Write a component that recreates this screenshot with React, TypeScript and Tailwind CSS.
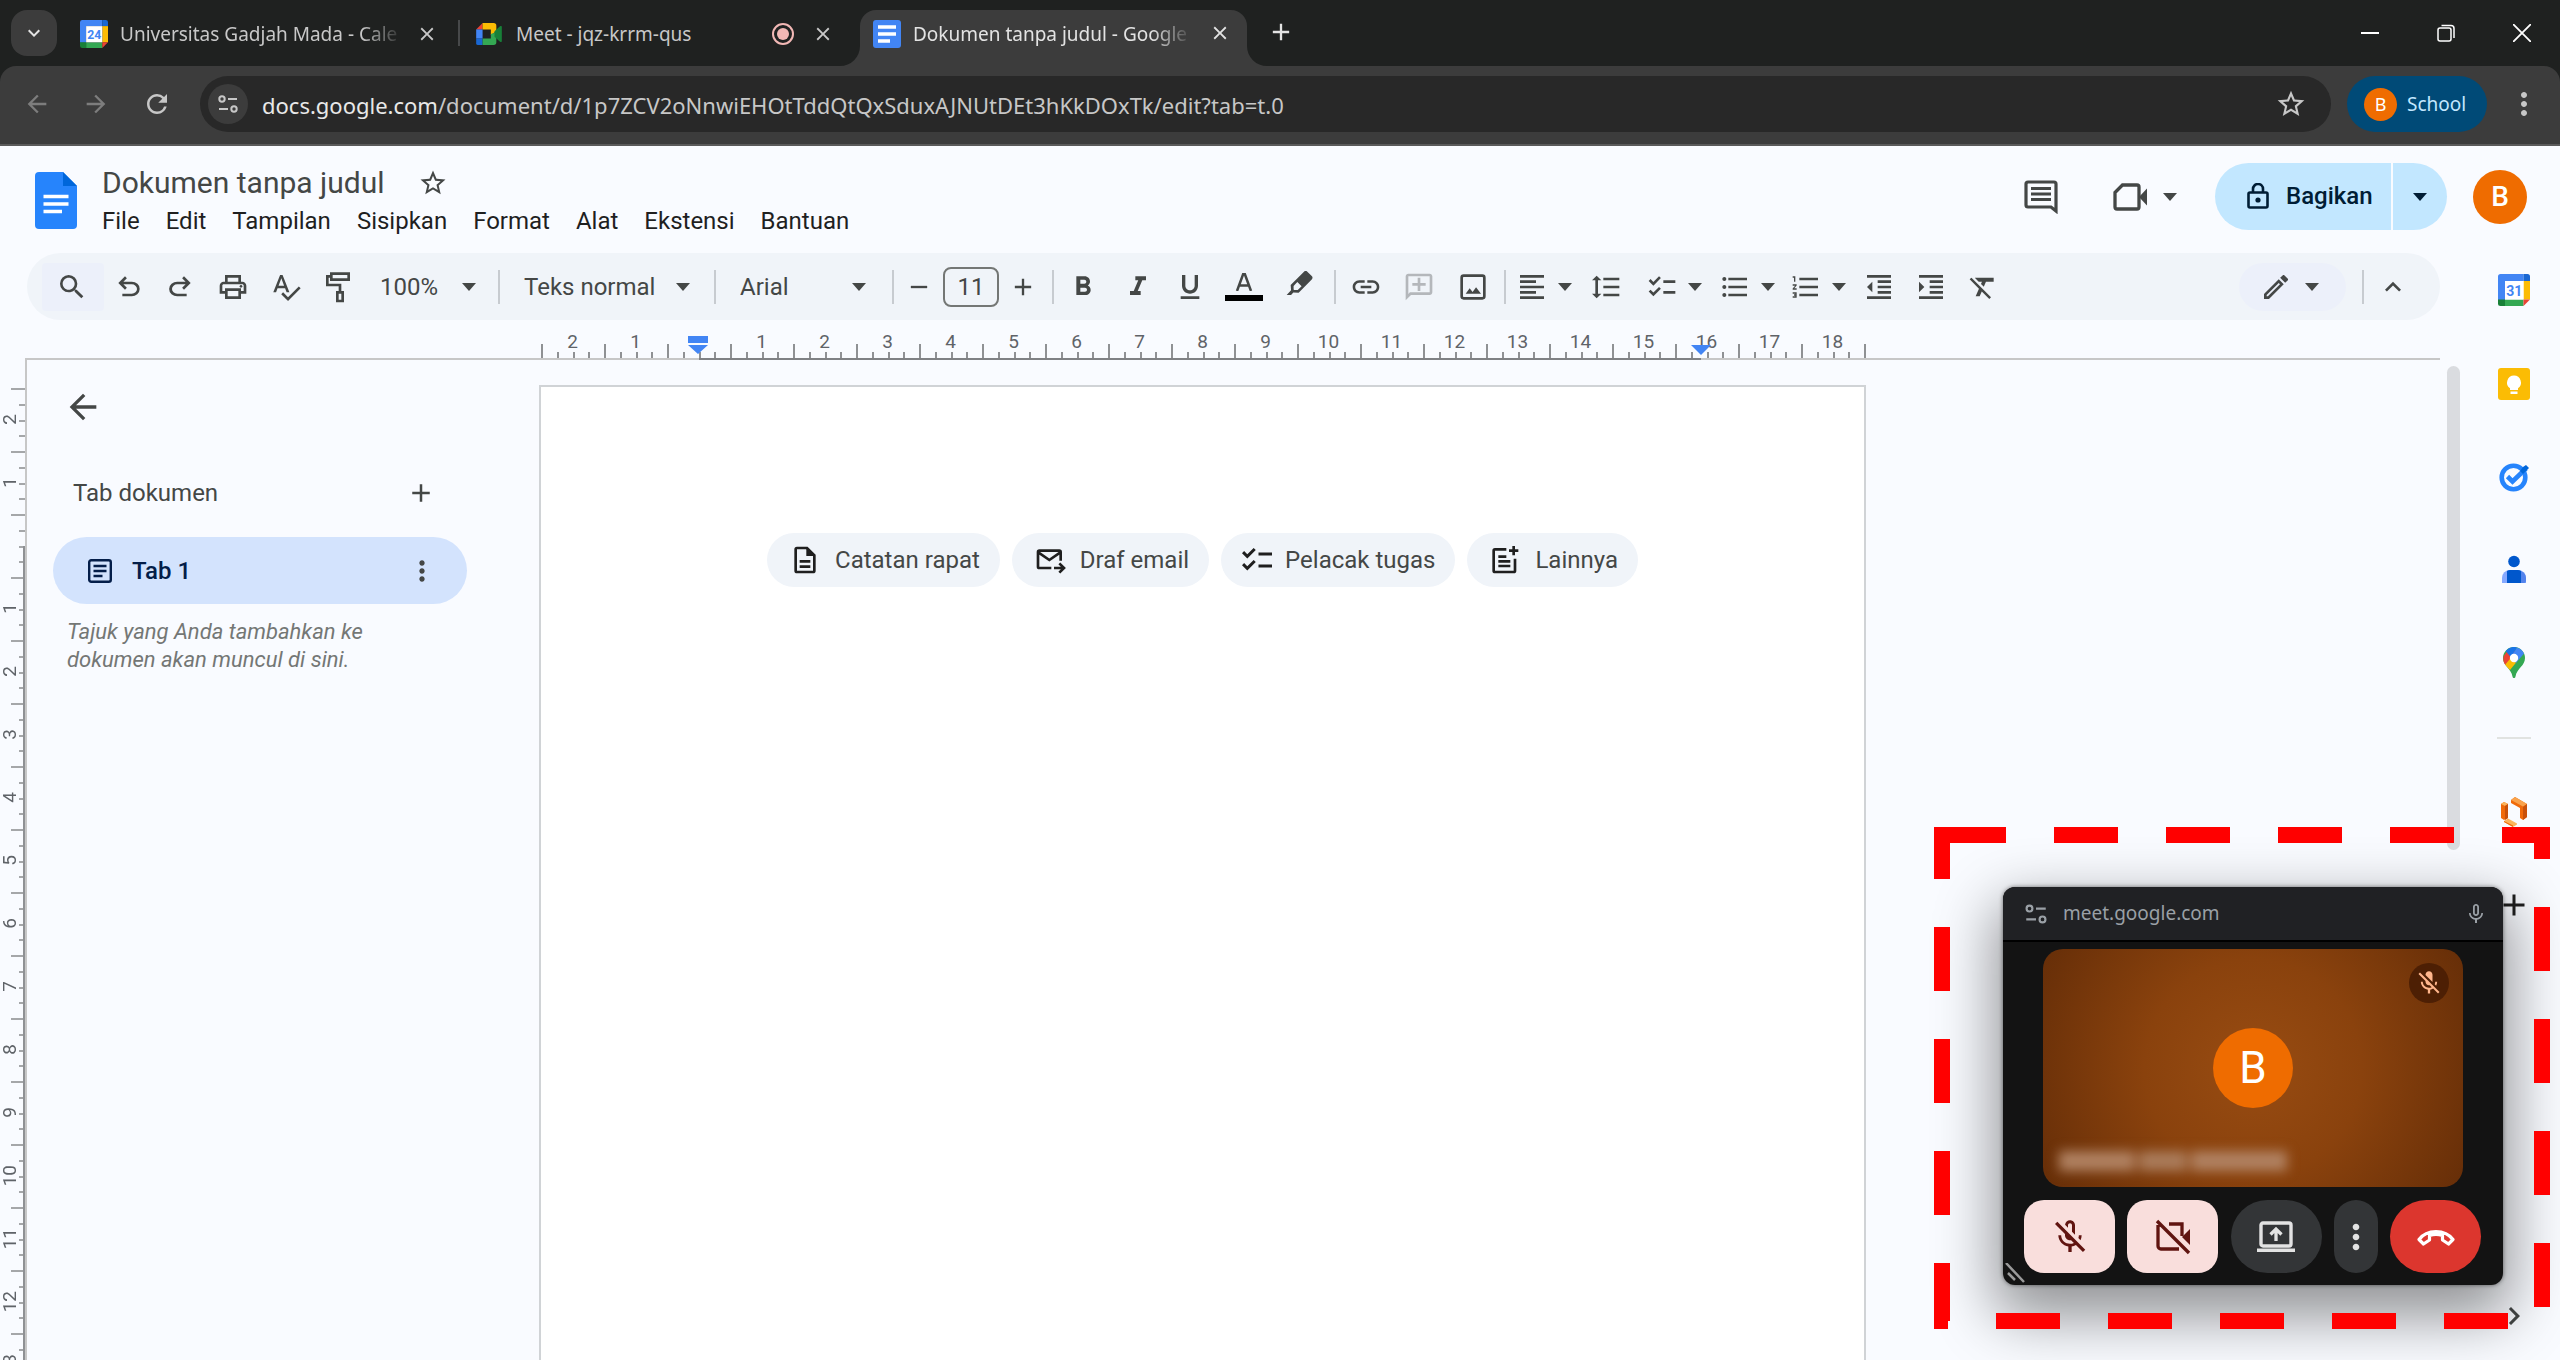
import React from "react";
import {
  MdSearch, MdOutlinePrint, MdSpellcheck, MdFormatBold, MdFormatItalic, MdFormatUnderlined, MdFormatAlignLeft,
  MdFormatLineSpacing, MdChecklist, MdFormatListBulleted, MdFormatListNumbered, MdFormatIndentDecrease,
  MdFormatIndentIncrease, MdFormatClear, MdInsertLink, MdOutlineAddComment, MdOutlineEdit, MdKeyboardArrowUp,
  MdMoreVert, MdStarBorder, MdAdd, MdRemove, MdArrowBack, MdArrowForward, MdRefresh, MdClose, MdKeyboardArrowDown,
  MdMicOff, MdOutlineMicOff, MdMicNone, MdChevronRight,
} from "react-icons/md";

type IconProps = { className?: string };

const Caret = ({ className = "" }: IconProps) => (
  <svg viewBox="0 0 14 8" className={"h-2 w-3.5 shrink-0 fill-current " + className} aria-hidden="true">
    <path d="M0 0h14L7 8z" />
  </svg>
);

const Symbol = ({ d, className = "size-8" }: { d: string; className?: string }) => (
  <svg viewBox="0 -960 960 960" className={"shrink-0 fill-current " + className} aria-hidden="true">
    <path d={d} />
  </svg>
);

const UNDO = "M280-200v-80h284q63 0 109.500-40T720-420q0-60-46.500-100T564-560H312l104 104-56 56-200-200 200-200 56 56-104 104h252q97 0 169.500 63T800-420q0 94-72.500 157T564-200H280Z";
const REDO = "M396-200q-97 0-169.500-63T154-420q0-94 72.500-157T396-640h252L544-744l56-56 200 200-200 200-56-56 104-104H396q-63 0-109.500 40T240-420q0 60 46.500 100T396-280h284v80H396Z";

const PaintRoller = () => (
  <svg viewBox="0 0 24 24" className="size-8 fill-none stroke-current stroke-2" aria-hidden="true">
    <path d="M7 2h13v4.500H7zM7 4H4v6.500h9.500V16M11.500 16h4v6.500h-4z" />
  </svg>
);

const Highlighter = () => (
  <svg viewBox="0 0 24 24" className="size-8 fill-current" aria-hidden="true">
    <path fillRule="evenodd" d="M2 18l3.300-3.500-.3-4L15 .5a1.800 1.800 0 0 1 2.500 0l3.300 3.300a1.800 1.800 0 0 1 0 2.500L11 16.300l-4-.2L5.300 18zM10 8.300L7.200 11.200v2.600l.4.400h2.700l2.900-2.800z" />
  </svg>
);

const ImageIcon = () => (
  <svg viewBox="0 0 24 24" className="size-8" aria-hidden="true">
    <rect x="3.500" y="3.500" width="17" height="17" rx="1.500" fill="none" stroke="currentColor" strokeWidth="2" />
    <path d="M6.500 17l3-4 2.200 2.700 2.600-3.600 3.700 4.900z" fill="currentColor" />
  </svg>
);

const TuneIcon = ({ className = "size-6" }: IconProps) => (
  <svg viewBox="0 0 24 24" className={"shrink-0 fill-none stroke-current stroke-2 " + className} aria-hidden="true">
    <circle cx="6" cy="7" r="2.700" />
    <path d="M12 7h9M3 17h9" />
    <circle cx="18" cy="17" r="2.700" />
  </svg>
);

const CalendarIcon = ({ day, className }: { day: string; className: string }) => (
  <svg viewBox="0 0 32 32" className={className} aria-hidden="true">
    <path d="M2.500 0H25.500V7H7v19H0V2.500A2.500 2.500 0 0 1 2.500 0z" fill="#4285f4" />
    <path d="M25.500 0h4A2.500 2.500 0 0 1 32 2.500V7h-6.500z" fill="#1967d2" />
    <path d="M25.500 7H32v18.500h-6.500z" fill="#fbbc04" />
    <path d="M7 25.500h18.500V32H7z" fill="#34a853" />
    <path d="M0 25.500h7V32H2.500A2.500 2.500 0 0 1 0 29.500z" fill="#188038" />
    <path d="M25.500 25.500H32L25.500 32z" fill="#ea4335" />
    <path d="M7 7h18.500v18.500H7z" fill="#fff" />
    <text x="16.200" y="21.500" textAnchor="middle" fontSize="14" fontWeight="700" fontFamily="Roboto, sans-serif" fill="#4285f4">{day}</text>
  </svg>
);

const MeetIcon = () => (
  <svg viewBox="0 0 28 24" className="h-5.5 w-6.5 shrink-0" aria-hidden="true">
    <path d="M0 7l7-7v7z" fill="#ea4335" />
    <path d="M7 0h12a3 3 0 0 1 3 3v6l-6 4V7H7z" fill="#fbbc04" />
    <path d="M0 7h7v10H0z" fill="#4285f4" />
    <path d="M0 17h7v7H2a2 2 0 0 1-2-2z" fill="#1967d2" />
    <path d="M7 17h9v-5l6-2v11a3 3 0 0 1-3 3H7z" fill="#34a853" />
    <path d="M20 9l6-5.500c1-.7 2-.3 2 .8v15.400c0 1.100-1 1.500-2 .8L20 15z" fill="#188038" />
  </svg>
);

const IconButton = ({ label, className = "w-13", children }: { label: string; className?: string; children: React.ReactNode }) => (
  <button aria-label={label} className={"flex h-12 shrink-0 items-center justify-center " + className}>
    {children}
  </button>
);

const Divider = () => <div className="h-8.5 w-0.5 shrink-0 bg-[#c7cbd0]" />;

const Select = ({ label, value, className }: { label: string; value: string; className: string }) => (
  <label className={"flex h-12 shrink-0 items-center " + className}>
    <select aria-label={label} defaultValue={value} className="min-w-0 flex-1 appearance-none bg-transparent outline-none">
      <option>{value}</option>
    </select>
    <Caret />
  </label>
);

/* ---------- Browser chrome ---------- */

const TabTitle = ({ children, className = "" }: { children: string; className?: string }) => (
  <span className={"min-w-0 flex-1 whitespace-nowrap " + className}>{children}</span>
);

const Flare = ({ className }: IconProps) => (
  <svg viewBox="0 0 20 20" className={"absolute bottom-0 size-5 fill-[#3c3c3c] " + className} aria-hidden="true">
    <path d="M20 0v20H0A20 20 0 0 0 20 0z" />
  </svg>
);

function TabStrip() {
  return (
    <div className="flex h-16.5 items-start pl-[11px] text-[19px] leading-7 text-[#c8c8c8]">
      <button aria-label="Telusuri tab" className="mt-2.5 flex h-11.5 w-11.5 shrink-0 items-center justify-center rounded-2xl bg-[#3c3c3c] text-[#e3e3e3]">
        <MdKeyboardArrowDown className="size-6" />
      </button>
      <div className="mt-2.5 flex h-12 w-[401px] items-center pr-5 pl-[23px]">
        <CalendarIcon day="24" className="mr-3 size-7 shrink-0" />
        <TabTitle className="mr-3 mask-r-from-85%">Universitas Gadjah Mada - Cale</TabTitle>
        <button aria-label="Tutup tab"><MdClose className="size-5.5" /></button>
      </div>
      <div className="mt-5 h-6.5 w-0.5 bg-[#47494a]" />
      <div className="mt-2.5 flex h-12 w-[400px] items-center pr-[26px] pl-4">
        <MeetIcon />
        <TabTitle className="mx-3.5">Meet - jqz-krrm-qus</TabTitle>
        <span className="mr-[18px] flex size-[22px] items-center justify-center rounded-full border-2 border-[#f2b8b5]">
          <span className="size-3 rounded-full bg-[#f2b8b5]" />
        </span>
        <button aria-label="Tutup tab"><MdClose className="size-5.5" /></button>
      </div>
      <div className="relative mt-2.5 flex h-14 w-[387px] items-start rounded-t-2xl bg-[#3c3c3c] pt-2.5 pr-4 pl-[13px] text-[#e3e3e3]">
        <Flare className="right-full" />
        <Flare className="left-full -scale-x-100" />
        <svg viewBox="0 0 28 28" className="mr-3 size-7 shrink-0" aria-hidden="true">
          <rect width="28" height="28" rx="3" fill="#4285f4" />
          <path d="M5 7h18M5 14h18M5 21h12" stroke="#fff" strokeWidth="3.500" />
        </svg>
        <TabTitle className="mr-4 mask-r-from-85%">Dokumen tanpa judul - Google</TabTitle>
        <button aria-label="Tutup tab" className="mt-0.5"><MdClose className="size-5.5" /></button>
      </div>
      <button aria-label="Tab baru" className="mt-4.5 ml-5 text-[#e3e3e3]"><MdAdd className="size-7" /></button>
      <div className="ml-auto flex h-16.5 items-center text-white">
        <button aria-label="Minimalkan" className="flex w-[76px] justify-center"><span className="h-0.5 w-4.5 bg-white" /></button>
        <button aria-label="Pulihkan" className="flex w-[76px] justify-center">
          <svg viewBox="0 0 18 18" className="size-4.5 fill-none stroke-white stroke-[1.500]" aria-hidden="true">
            <rect x="1" y="4" width="13" height="13" rx="2" />
            <path d="M4.500 1.500H14A3 3 0 0 1 17 4.500V14" />
          </svg>
        </button>
        <button aria-label="Tutup" className="flex w-[76px] justify-center">
          <svg viewBox="0 0 18 18" className="size-4.5 stroke-white stroke-[1.800]" aria-hidden="true"><path d="M0 0l18 18M18 0L0 18" /></svg>
        </button>
      </div>
    </div>
  );
}

function AddressBar() {
  return (
    <div className="flex h-20 items-center rounded-t-2xl border-b-2 border-[#5a5a5a] bg-[#3c3c3c] pb-0.5 pl-2.5 text-[#c7c7c7]">
      <IconButton label="Kembali" className="w-[53px] text-[#7d7d7d]"><MdArrowBack className="size-7" /></IconButton>
      <IconButton label="Maju" className="w-[66px] text-[#7d7d7d]"><MdArrowForward className="size-7" /></IconButton>
      <IconButton label="Muat ulang" className="w-14"><MdRefresh className="size-7.5" /></IconButton>
      <div className="ml-[15px] flex h-14 min-w-0 flex-1 items-center rounded-full bg-[#282828] pr-6 pl-2">
        <button aria-label="Informasi situs" className="flex size-10 shrink-0 items-center justify-center rounded-full bg-[#3c3c3c]"><TuneIcon /></button>
        <div className="ml-3.5 min-w-0 flex-1 truncate pt-0.5 text-[22px]">
          <span className="text-[#e8e8e8]">docs.google.com</span>/document/d/1p7ZCV2oNnwiEHOtTddQtQxSduxAJNUtDEt3hKkDOxTk/edit?tab=t.0
        </div>
        <button aria-label="Tandai"><MdStarBorder className="size-8" /></button>
      </div>
      <button className="ml-4 flex h-14 w-35 items-center rounded-full bg-[#004a77] pl-[17px] text-[19px] text-[#c2e7ff]">
        <span className="mr-2.5 flex size-[33px] items-center justify-center rounded-full bg-[#ef6c00] text-lg text-white">B</span>
        School
      </button>
      <IconButton label="Menu" className="w-[73px]"><MdMoreVert className="size-9" /></IconButton>
    </div>
  );
}

/* ---------- Document header ---------- */

const MENUS = ["File", "Edit", "Tampilan", "Sisipkan", "Format", "Alat", "Ekstensi", "Bantuan"];

function DocHeader() {
  return (
    <header className="flex h-[107px] items-start pr-[33px] pl-[35px]">
      <svg viewBox="0 0 42 57" className="mt-6.5 h-[57px] w-[42px] shrink-0" aria-hidden="true">
        <path d="M4 0h24l14 14v39a4 4 0 0 1-4 4H4a4 4 0 0 1-4-4V4a4 4 0 0 1 4-4z" fill="#2684fc" />
        <path d="M28 0l14 14H28z" fill="#0066da" />
        <path d="M8.500 24.500h25M8.500 32h25M8.500 39.500h18.500" stroke="#fff" strokeWidth="3.500" />
      </svg>
      <div className="mt-[19px] ml-[25px] flex-1">
        <div className="flex items-center text-[#444746]">
          <h1 className="text-[30px] leading-9">Dokumen tanpa judul</h1>
          <button aria-label="Beri bintang" className="ml-[33px]"><MdStarBorder className="size-[30px]" /></button>
        </div>
        <nav className="mt-0.5 flex gap-[26px] text-[24px] leading-9 text-[#1f1f1f]">
          {MENUS.map((m) => <button key={m}>{m}</button>)}
        </nav>
      </div>
      <div className="mt-[17px] flex items-center text-[#444746]">
        <button aria-label="Komentar" className="mr-[55px]">
          <svg viewBox="0 0 34 34" className="size-[34px]" aria-hidden="true">
            <path d="M4 2h26a2 2 0 0 1 2 2v27l-5-4H4a2 2 0 0 1-2-2V4a2 2 0 0 1 2-2z" fill="none" stroke="currentColor" strokeWidth="3.200" />
            <path d="M7 8.500h20M7 14h20M7 19.500h20" stroke="currentColor" strokeWidth="3" />
          </svg>
        </button>
        <button aria-label="Mulai panggilan video" className="mr-[38px] flex items-center gap-4">
          <svg viewBox="0 0 34 28" className="h-7 w-[34px]" aria-hidden="true">
            <path d="M9.500 2H24a2 2 0 0 1 2 2v20a2 2 0 0 1-2 2H4a2 2 0 0 1-2-2V9.500z" fill="none" stroke="currentColor" strokeWidth="3.300" />
            <path d="M26 14l8-8.500v17z" fill="currentColor" />
          </svg>
          <Caret />
        </button>
        <div className="mr-[26px] flex h-[67px] gap-0.5 text-[#001d35]">
          <button className="flex w-44 items-center rounded-l-full bg-[#c2e7ff] pb-0.5 pl-8 text-[24px] font-medium">
            <svg viewBox="0 0 22 26" className="mr-[17px] h-[26px] w-[22px]" aria-hidden="true">
              <rect x="1.500" y="9.500" width="19" height="15" rx="1.500" fill="none" stroke="currentColor" strokeWidth="2.600" />
              <path d="M6 9V6a5 5 0 0 1 10 0v3" fill="none" stroke="currentColor" strokeWidth="2.600" />
              <circle cx="11" cy="17" r="2.600" fill="currentColor" />
            </svg>
            Bagikan
          </button>
          <button aria-label="Opsi berbagi" className="flex w-[54px] items-center rounded-r-full bg-[#c2e7ff] pl-5"><Caret /></button>
        </div>
        <button aria-label="Akun" className="flex size-[54px] items-center justify-center rounded-full bg-[#ef6c00] text-[28px] font-medium text-white">B</button>
      </div>
    </header>
  );
}

function Toolbar() {
  return (
    <div role="toolbar" className="mr-7 ml-[27px] flex h-[67px] items-center rounded-full bg-[#f0f4f9] pl-[15px] text-[24px] text-[#444746]">
      <IconButton label="Telusuri menu" className="w-[62px] rounded bg-[#ecf0fa] pr-0.5"><MdSearch className="size-8" /></IconButton>
      <IconButton label="Urungkan" className="w-[50px]"><Symbol d={UNDO} /></IconButton>
      <IconButton label="Ulangi"><Symbol d={REDO} /></IconButton>
      <IconButton label="Cetak" className="w-[54px]"><MdOutlinePrint className="size-8" /></IconButton>
      <IconButton label="Periksa ejaan"><MdSpellcheck className="size-8" /></IconButton>
      <IconButton label="Salin format"><PaintRoller /></IconButton>
      <Select label="Zoom" value="100%" className="w-[134px] pr-5.5 pl-4" />
      <Divider />
      <Select label="Gaya" value="Teks normal" className="w-[214px] pr-6 pl-6" />
      <Divider />
      <Select label="Font" value="Arial" className="w-44 pr-6.5 pl-6" />
      <Divider />
      <IconButton label="Kurangi ukuran font" className="w-[49px]"><MdRemove className="size-7" /></IconButton>
      <input aria-label="Ukuran font" defaultValue="11" className="h-10 w-14 shrink-0 rounded-lg border-2 border-[#747775] bg-transparent text-center outline-none" />
      <IconButton label="Tambah ukuran font" className="mr-[5px] w-12"><MdAdd className="size-7" /></IconButton>
      <Divider />
      <IconButton label="Tebal" className="w-[58px]"><MdFormatBold className="size-8" /></IconButton>
      <IconButton label="Miring"><MdFormatItalic className="size-8" /></IconButton>
      <IconButton label="Garis bawah"><MdFormatUnderlined className="size-8" /></IconButton>
      <IconButton label="Warna teks" className="w-14">
        <span className="flex flex-col items-center">
          <svg viewBox="0 0 18 18" className="size-4.5 fill-none stroke-current stroke-[2.500]" aria-hidden="true"><path d="M2 18L8.200 1h1.600L16 18M4.500 12.500h9" /></svg>
          <span className="mt-1 h-1.5 w-[38px] bg-black" />
        </span>
      </IconButton>
      <IconButton label="Warna sorotan" className="mr-1.5 w-14"><Highlighter /></IconButton>
      <Divider />
      <IconButton label="Sisipkan link" className="w-15"><MdInsertLink className="size-8" /></IconButton>
      <IconButton label="Tambahkan komentar" className="w-[46px] text-[#b4b7bb]"><MdOutlineAddComment className="size-8 -scale-x-100" /></IconButton>
      <IconButton label="Sisipkan gambar" className="w-[62px]"><ImageIcon /></IconButton>
      <Divider />
      <IconButton label="Perataan" className="w-[75px] gap-2.5"><MdFormatAlignLeft className="size-8" /><Caret /></IconButton>
      <IconButton label="Spasi baris" className="mr-1.5 w-[50px]"><MdFormatLineSpacing className="size-8" /></IconButton>
      <IconButton label="Checklist" className="w-[74px] gap-2.5"><MdChecklist className="size-8" /><Caret /></IconButton>
      <IconButton label="Daftar berbutir" className="w-[72px] gap-2.5"><MdFormatListBulleted className="size-8" /><Caret /></IconButton>
      <IconButton label="Daftar bernomor" className="w-[70px] gap-2.5"><MdFormatListNumbered className="size-8" /><Caret /></IconButton>
      <IconButton label="Kurangi indentasi"><MdFormatIndentDecrease className="size-8" /></IconButton>
      <IconButton label="Tambah indentasi"><MdFormatIndentIncrease className="size-8" /></IconButton>
      <IconButton label="Hapus format"><MdFormatClear className="size-8" /></IconButton>
      <div className="flex-1" />
      <IconButton label="Mode pengeditan" className="w-[107px] gap-[13px] rounded-full bg-[#ecf0fa] pr-1.5"><MdOutlineEdit className="size-8" /><Caret /></IconButton>
      <div className="ml-4"><Divider /></div>
      <IconButton label="Sembunyikan menu" className="mr-[18px] w-[58px]"><MdKeyboardArrowUp className="size-8" /></IconButton>
    </div>
  );
}

/* ---------- Rulers ---------- */

const H_CELLS = Array.from({ length: 21 }, (_, i) => i - 2);
const V_CELLS = Array.from({ length: 16 }, (_, i) => i - 2);

function HorizontalRuler() {
  return (
    <div className="relative mr-7 ml-[25px] flex h-10 border-b-2 border-[#c7c7c7] pl-[516px] text-[19px] text-[#5f6368]">
      {H_CELLS.map((n) => (
        <div key={n} className="flex h-[38px] w-[63px] shrink-0 flex-col justify-end">
          <span className="-mb-2 text-center leading-5">{n === 0 ? "" : Math.abs(n)}</span>
          <div className="grid h-[14px] grid-cols-4 items-end">
            <i className="h-full border-l-2 border-[#8f9194]" />
            <i className="h-1.5 border-l-2 border-[#8f9194]" />
            <i className="h-1.5 border-l-2 border-[#8f9194]" />
            <i className="h-1.5 border-l-2 border-[#8f9194]" />
          </div>
        </div>
      ))}
      <div className="h-[38px] w-0.5 shrink-0 self-end pt-6"><div className="h-[14px] bg-[#8f9194]" /></div>
      <div className="absolute top-[38px] left-[674px] h-0.5 w-[1002px] bg-[#7f8184]" />
      <svg viewBox="0 0 20 18" className="absolute top-4 left-[663px] h-4.5 w-5 fill-[#4285f4]" aria-hidden="true"><path d="M0 0h20v7H0zM0 9h20L10 18z" /></svg>
      <svg viewBox="0 0 20 10" className="absolute top-[25px] left-[1666px] h-2.5 w-5 fill-[#4285f4]" aria-hidden="true"><path d="M0 0h20L10 10z" /></svg>
    </div>
  );
}

function VerticalRuler() {
  return (
    <div className="relative w-[27px] shrink-0 overflow-hidden border-r-2 border-[#c7c7c7] pt-7 text-[19px] text-[#5f6368]">
      {V_CELLS.map((n) => (
        <div key={n} className="flex h-[63px] items-stretch">
          <span className="-mr-[9px] flex w-5 shrink-0 items-center justify-center">
            <span className="rotate-180 leading-5 [writing-mode:vertical-rl]">{n === 0 ? "" : Math.abs(n)}</span>
          </span>
          <div className="grid flex-1 grid-rows-4 justify-items-end">
            <i className="w-full border-t-2 border-[#a5a7a9]" />
            <i className="w-1.5 border-t-2 border-[#a5a7a9]" />
            <i className="w-1.5 border-t-2 border-[#a5a7a9]" />
            <i className="w-1.5 border-t-2 border-[#a5a7a9]" />
          </div>
        </div>
      ))}
      <div className="absolute top-[186px] right-0 bottom-0 w-0.5 bg-[#8f9194]" />
    </div>
  );
}

/* ---------- Document area ---------- */

function Outline() {
  return (
    <aside className="w-[512px] shrink-0 pr-18 pl-6.5 text-[24px]">
      <button aria-label="Tutup panel" className="mt-[27px] ml-2.5 block text-[#444746]"><MdArrowBack className="size-10" /></button>
      <div className="mt-11.5 flex h-10 items-center justify-between pr-[31px] pl-5 text-[#444746]">
        <h2>Tab dokumen</h2>
        <button aria-label="Tambah tab"><MdAdd className="size-7.5" /></button>
      </div>
      <div className="mt-6 flex h-[67px] items-center rounded-full bg-[#d3e3fd] pr-[29px] pl-[35px] font-medium text-[#041e49]">
        <svg viewBox="0 0 24 24" className="mr-5 size-6 fill-none stroke-current stroke-[2.400]" aria-hidden="true">
          <rect x="1.200" y="1.200" width="21.600" height="21.600" rx="2" />
          <path d="M5.500 7h13M5.500 12h13M5.500 17h9" />
        </svg>
        <span className="flex-1">Tab 1</span>
        <button aria-label="Opsi tab" className="text-[#444746]"><MdMoreVert className="size-8" /></button>
      </div>
      <p className="mt-3.5 ml-3.5 w-[320px] text-[22px] leading-7 text-[#747775] italic">Tajuk yang Anda tambahkan ke dokumen akan muncul di sini.</p>
    </aside>
  );
}

const chipSvg = "size-8 shrink-0 fill-none stroke-current stroke-2";
const CHIPS: [string, React.ReactNode][] = [
  ["Catatan rapat", (
    <svg viewBox="0 0 24 24" className={chipSvg} aria-hidden="true">
      <path d="M13.500 3H6a1 1 0 0 0-1 1v16a1 1 0 0 0 1 1h12a1 1 0 0 0 1-1V8.500zM8 13h8M8 17h8" />
      <path d="M13 2.500V9h6.500z" className="fill-current stroke-none" />
    </svg>
  )],
  ["Draf email", (
    <svg viewBox="0 0 24 24" className={chipSvg} aria-hidden="true">
      <path d="M13 18H4a1 1 0 0 1-1-1V6a1 1 0 0 1 1-1h15a1 1 0 0 1 1 1v6.500M3.500 6.500l8 5.500 8-5.500M15 18h7M19 14.500l3.500 3.500-3.500 3.500" />
    </svg>
  )],
  ["Pelacak tugas", <MdChecklist className="-mr-1 -ml-1 size-9 shrink-0" />],
  ["Lainnya", (
    <svg viewBox="0 0 24 24" className={chipSvg} aria-hidden="true">
      <path d="M13 4H4.500a1 1 0 0 0-1 1v15a1 1 0 0 0 1 1h14a1 1 0 0 0 1-1V11M7 9.500h6M7 13h9M7 16.500h9M18.500 1.500v7M15 5h7" />
    </svg>
  )],
];

function Page() {
  return (
    <main className="mt-[25px] w-[1327px] shrink-0 border-2 border-b-0 border-[#d0d3d6] bg-white">
      <div className="mt-[146px] flex justify-center gap-3 text-[24px] text-[#444746]">
        {CHIPS.map(([label, icon]) => (
          <button key={label} className="flex h-[54px] items-center gap-3.5 rounded-full bg-[#f0f4f9] pr-5 pl-[22px] whitespace-nowrap">
            <span className="text-[#1f1f1f]">{icon}</span>
            {label}
          </button>
        ))}
      </div>
    </main>
  );
}

function SideRail() {
  const cell = "flex h-[93px] w-full items-center justify-center";
  return (
    <aside className="flex w-23 shrink-0 flex-col items-center">
      <button aria-label="Kalender" className="flex h-[74px] w-full items-center justify-center"><CalendarIcon day="31" className="size-8" /></button>
      <button aria-label="Keep" className={cell + " mt-2.5"}>
        <svg viewBox="0 0 32 32" className="size-8" aria-hidden="true">
          <rect width="32" height="32" rx="3" fill="#fbbc04" />
          <path d="M16 7.500a7 7 0 0 0-4 12.700V22h8v-1.800A7 7 0 0 0 16 7.500zM12.500 23.500h7V26h-7z" fill="#fff" />
        </svg>
      </button>
      <button aria-label="Tasks" className={cell}>
        <svg viewBox="0 0 30 30" className="size-7.5" aria-hidden="true">
          <circle cx="14.500" cy="15.500" r="11.800" fill="none" stroke="#2684fc" strokeWidth="4.600" />
          <path d="M8.500 14.500l5 5L27 6.500" fill="none" stroke="#2684fc" strokeWidth="4.600" />
          <path d="M21 9l3-4 3-2 3 3-6 6z" fill="#0066da" />
        </svg>
      </button>
      <button aria-label="Kontak" className={cell}>
        <svg viewBox="0 0 24 30" className="h-7.5 w-6" aria-hidden="true">
          <path d="M0 28v-5a8 8 0 0 1 8-8h8a8 8 0 0 1 8 8v5z" fill="#86a9ff" />
          <path d="M5 28V16c1-.7 2-1 3-1h8a8 8 0 0 1 3 1v12z" fill="#0057cc" />
          <path d="M19 28V16a8 8 0 0 1 5 7v3a2 2 0 0 1-2 2z" fill="#5383ec" />
          <circle cx="12" cy="6.500" r="5.800" fill="#0057cc" />
        </svg>
      </button>
      <button aria-label="Maps" className={cell}>
        <svg viewBox="0 0 22 31" className="h-[31px] w-[22px]" aria-hidden="true">
          <path d="M11 0a11 11 0 0 1 11 11c0 8-8 10-9.500 18.500-.3 2-2.700 2-3 0C8 21 0 19 0 11A11 11 0 0 1 11 0z" fill="#34a853" />
          <path d="M2.500 18L14 5 6 2 1 8.500C-.5 12 .5 15.500 2.500 18z" fill="#ea4335" />
          <path d="M2.300 17.500L11 7l5 5-9 11c-2-2-3.500-3.500-4.700-5.500z" fill="#fbbc04" />
          <path d="M2.700 4A11 11 0 0 1 14 .4L8 10.500z" fill="#1a73e8" />
          <path d="M14 .4a11 11 0 0 1 7 6L13 16 8 10z" fill="#4285f4" />
          <circle cx="11" cy="11" r="4.200" fill="#fff" />
        </svg>
      </button>
      <div className="mt-7 mb-[26px] h-0.5 w-[34px] bg-[#e1e3e1]" />
      <button aria-label="Add-on" className={cell}>
        <svg viewBox="0 0 26 30" className="h-7.5 w-6.5" aria-hidden="true">
          <path d="M0 7l3-2 4 2v14l-4 2-3-2z" fill="#f06a0a" />
          <path d="M0 7l3-2 4 2-3 2z" fill="#fbb45c" />
          <path d="M4 9l3-2v14l-3 2z" fill="#c9510a" />
          <path d="M10 3l4-3 12 7v13l-4 3-3-2V11l-9-5z" fill="#f06a0a" />
          <path d="M10 3l4-3 12 7-4 2.500z" fill="#f9a24b" />
          <path d="M22 10l4-3v13l-4 3z" fill="#c9510a" />
          <path d="M3 24l4-2.500 9 5v1L12 30l-9-5z" fill="#fbb45c" />
          <path d="M3 24l9 4.500V30l-9-5z" fill="#f06a0a" />
        </svg>
      </button>
      <button aria-label="Dapatkan add-on" className={cell + " text-[#1f1f1f]"}><MdAdd className="size-9" /></button>
      <button aria-label="Sembunyikan panel samping" className="mt-auto mb-6.5 text-[#444746]"><MdChevronRight className="size-9" /></button>
    </aside>
  );
}

/* ---------- Floating meeting window ---------- */

const ctl = "flex h-[73px] items-center justify-center ";

function MeetWindow() {
  return (
    <section aria-label="meet.google.com" className="absolute top-[887px] right-[57px] flex h-[398px] w-[500px] flex-col overflow-hidden rounded-xl bg-[#131313] font-['Noto_Sans',sans-serif] shadow-[0_24px_60px_8px_rgba(0,0,0,0.42),0_0_4px_rgba(0,0,0,0.5)]">
      <div className="flex h-[55px] shrink-0 items-center border-b-2 border-black bg-[#202124] pr-[15px] pl-5 text-[19px] text-[#9aa0a6]">
        <TuneIcon className="size-6.5" />
        <span className="ml-3.5 flex-1">meet.google.com</span>
        <MdMicNone className="size-6" />
      </div>
      <div className="relative mx-10 mt-[7px] flex h-[238px] items-center justify-center rounded-[20px] bg-[radial-gradient(circle,#984c12_0%,#8a420d_45%,#662e08_100%)]">
        <div className="flex size-20 items-center justify-center rounded-full bg-[#ef6c00] font-[Roboto,sans-serif] text-[44px] text-white">B</div>
        <div className="absolute top-3.5 right-3.5 flex size-10 items-center justify-center rounded-full bg-[#4d1f04] text-[#ffb68c]"><MdMicOff className="size-7" /></div>
        <div aria-hidden="true" className="absolute bottom-4 left-4 flex gap-1 blur-[6px]">
          <span className="h-5 w-19 bg-[#b08161]" />
          <span className="h-5 w-12 bg-[#aa7b5a]" />
          <span className="h-5 w-24 bg-[#b08161]" />
        </div>
      </div>
      <div className="mt-[13px] flex justify-between pr-[22px] pl-[21px]">
        <button aria-label="Aktifkan mikrofon" className={ctl + "w-[91px] rounded-[20px] bg-[#f9dedc] text-[#601410]"}><MdOutlineMicOff className="size-10" /></button>
        <button aria-label="Aktifkan kamera" className={ctl + "w-[91px] rounded-[20px] bg-[#f9dedc] text-[#601410]"}>
          <svg viewBox="0 0 36 36" className="size-9" aria-hidden="true">
            <path d="M14 5h13v12M3 6v21a3 3 0 0 0 3 3h18M6 6H4" fill="none" stroke="currentColor" strokeWidth="3.300" />
            <path d="M27 18l8-8v16z" fill="currentColor" />
            <path d="M2 2l32 32" stroke="currentColor" strokeWidth="3.300" />
          </svg>
        </button>
        <button aria-label="Presentasikan" className={ctl + "w-[91px] rounded-full bg-[#333537] text-[#e3e3e3]"}>
          <svg viewBox="0 0 38 32" className="h-8 w-[38px]" aria-hidden="true">
            <rect x="4" y="2" width="30" height="23" rx="2" fill="none" stroke="currentColor" strokeWidth="3.400" />
            <path d="M0 27.500h38V31H0z" fill="currentColor" />
            <path d="M19 20V9M13.500 13.500L19 8l5.500 5.500" fill="none" stroke="currentColor" strokeWidth="3.300" />
          </svg>
        </button>
        <button aria-label="Opsi lainnya" className={ctl + "w-11 rounded-full bg-[#333537] text-[#e3e3e3]"}><MdMoreVert className="size-10" /></button>
        <button aria-label="Keluar dari panggilan" className={ctl + "w-[91px] rounded-full bg-[#dc362e] text-white"}>
          <svg viewBox="0 0 38 18" className="h-4.5 w-[38px]" aria-hidden="true">
            <path d="M2 11.500C10 1 28 1 36 11.500L31.500 16 25.500 12V7.500C21.500 6 16.500 6 12.500 7.500V12l-6 4z" fill="none" stroke="currentColor" strokeWidth="3.200" strokeLinejoin="round" />
          </svg>
        </button>
      </div>
      <svg viewBox="0 0 20 20" className="absolute bottom-0.5 left-0.5 size-5 stroke-[#9a9a9a] stroke-[2.500]" aria-hidden="true"><path d="M1 0l18 19M3 10l7 7" /></svg>
    </section>
  );
}

function DashedFrame() {
  return (
    <svg viewBox="0 0 616 502" className="pointer-events-none absolute top-[827px] right-2.5 h-[502px] w-[616px]" aria-hidden="true">
      <rect x="8" y="8" width="600" height="486" fill="none" stroke="#ff0000" strokeWidth="16" strokeDasharray="64 48" />
    </svg>
  );
}

export default function App() {
  return (
    <div className="relative flex h-screen flex-col overflow-hidden bg-[#f9fbff] font-[Roboto,sans-serif]">
      <div className="shrink-0 bg-[#1f2120] font-['Noto_Sans',sans-serif]">
        <TabStrip />
        <AddressBar />
      </div>
      <DocHeader />
      <div className="flex min-h-0 flex-1">
        <div className="flex min-w-0 flex-1 flex-col">
          <Toolbar />
          <HorizontalRuler />
          <div className="flex min-h-0 flex-1 overflow-hidden">
            <VerticalRuler />
            <Outline />
            <Page />
            <div className="mt-1.5 mr-2 ml-auto h-[484px] w-[13px] rounded-full bg-[#dadce0]" />
          </div>
        </div>
        <SideRail />
      </div>
      <MeetWindow />
      <DashedFrame />
    </div>
  );
}
